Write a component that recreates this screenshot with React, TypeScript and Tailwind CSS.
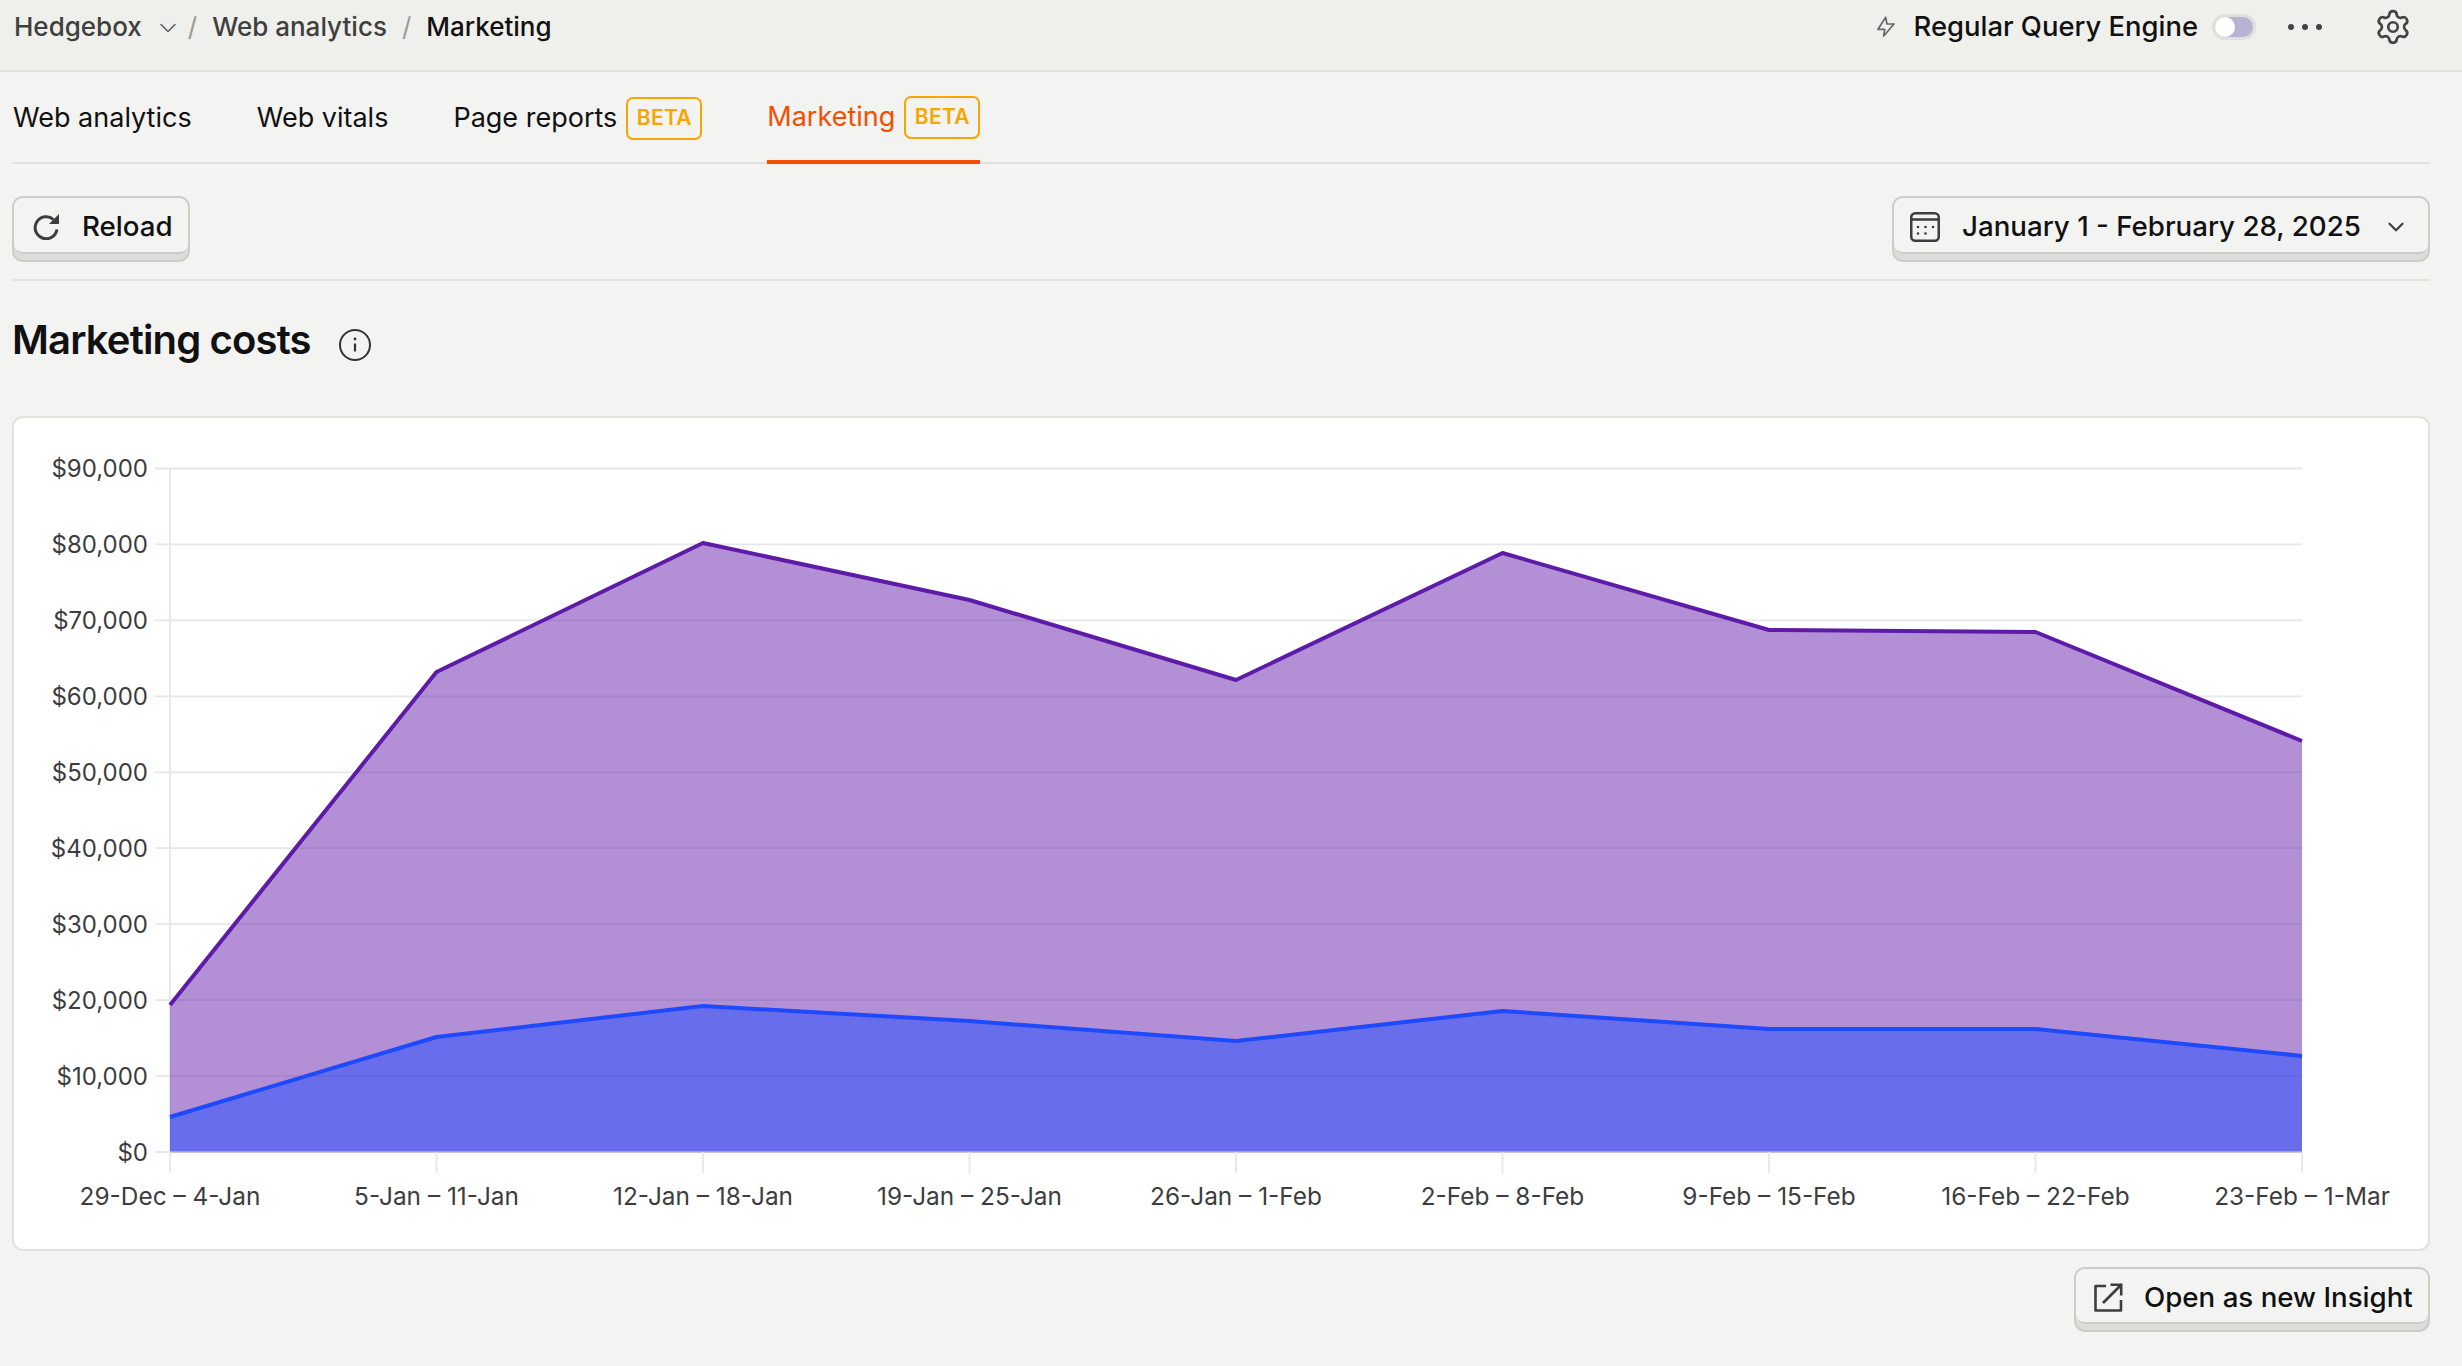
import { ChevronDown, Settings } from 'lucide-react'

const FONT = "font-['Inter','Noto_Sans',sans-serif]"

const yLabels = ['$90,000', '$80,000', '$70,000', '$60,000', '$50,000', '$40,000', '$30,000', '$20,000', '$10,000', '$0']
const xLabels = [
  '29-Dec – 4-Jan',
  '5-Jan – 11-Jan',
  '12-Jan – 18-Jan',
  '19-Jan – 25-Jan',
  '26-Jan – 1-Feb',
  '2-Feb – 8-Feb',
  '9-Feb – 15-Feb',
  '16-Feb – 22-Feb',
  '23-Feb – 1-Mar',
]

// y pixel of each point, inside the svg that starts at the card's corner
const PURPLE = [1005, 672, 543, 600, 680, 553, 630, 632, 741]
const BLUE = [1117, 1037, 1006, 1021, 1041, 1011, 1029, 1029, 1056]

const LEFT = 170
const RIGHT = 2302
const TOP = 468.5
const BASE = 1152
const STEP_X = (RIGHT - LEFT) / 8
const STEP_Y = (BASE - TOP) / 9

const toPoints = (ys: number[]) => ys.map((y, i) => `${LEFT + i * STEP_X},${y}`).join(' ')
const toArea = (ys: number[]) => `${LEFT},${BASE} ${toPoints(ys)} ${RIGHT},${BASE}`

function Beta() {
  return (
    <span className="flex h-[43px] w-[76px] items-center justify-center rounded-[7px] border-2 border-[#f7a501] text-[21px] font-semibold tracking-[0.3px] text-[#f7a501]">
      BETA
    </span>
  )
}

function DepthButton({ className, children }: { className: string; children: React.ReactNode }) {
  return (
    <button className={`rounded-[11px] border-2 border-[#cdcdc8] bg-[#dcdcd8] pb-[6px] text-[27.7px] font-medium text-[#111] ${className}`}>
      <span className="flex h-full items-center rounded-[9px] border-b-2 border-[#cdcdc8] bg-[#f3f3f1] pt-[4px]">{children}</span>
    </button>
  )
}

function Chart() {
  return (
    // the svg is placed so its coordinates equal the page's
    <svg viewBox="12 416 2418 835" className="block h-[835px] w-[2418px]">
      {yLabels.map((label, i) => {
        const y = TOP + i * STEP_Y
        return (
          <g key={label}>
            <line x1={155} x2={RIGHT} y1={y} y2={y} stroke="#e6e6eb" strokeWidth={1.8} />
            <text x={148} y={y + 8.5} textAnchor="end" fontSize={24} fill="#3d3d40">
              {label}
            </text>
          </g>
        )
      })}
      <line x1={LEFT} x2={LEFT} y1={TOP} y2={BASE} stroke="#e6e6eb" strokeWidth={1.8} />
      <polygon points={toArea(PURPLE)} fill="#5d14a7" fillOpacity={0.47} />
      <polygon points={toArea(BLUE)} fill="#1d4aff" fillOpacity={0.5} />
      <polyline points={toPoints(PURPLE)} fill="none" stroke="#5d1ba7" strokeWidth={4} strokeLinejoin="round" />
      <polyline points={toPoints(BLUE)} fill="none" stroke="#1d4aff" strokeWidth={4} strokeLinejoin="round" />
      <line x1={LEFT} x2={RIGHT} y1={BASE} y2={BASE} stroke="#b9b9c9" strokeWidth={1.5} />
      {xLabels.map((label, i) => {
        const x = LEFT + i * STEP_X
        return (
          <g key={label}>
            <line x1={x} x2={x} y1={BASE} y2={1173} stroke="#e6e6eb" strokeWidth={1.8} />
            <text x={x} y={1204.5} textAnchor="middle" fontSize={24.4} fill="#3d3d40">
              {label}
            </text>
          </g>
        )
      })}
    </svg>
  )
}

export default function App() {
  return (
    <div className={`${FONT} min-h-screen bg-[#f3f3f1] text-[#111]`}>
      {/* Top bar */}
      <header className="flex h-[72px] items-center justify-between border-b-2 border-[#e2e2dd] bg-[#efefeb] pb-[17px] pl-[14px] pr-[50px] text-[26px] font-medium">
        <div className="flex items-center">
          <span className="text-[#3f3f3f]">Hedgebox</span>
          <ChevronDown className="ml-[12px] mt-[2px] h-[28px] w-[28px] text-[#555]" strokeWidth={1.2} />
          <span className="ml-[6px] font-normal text-[#9a9a96]">/</span>
          <span className="ml-[15px] text-[#3f3f3f]">Web analytics</span>
          <span className="ml-[15px] font-normal text-[#9a9a96]">/</span>
          <span className="ml-[15px] text-[#111]">Marketing</span>
        </div>
        <div className="flex items-center">
          <svg viewBox="0 0 22 24" className="h-[24px] w-[22px] text-[#666]" fill="none" stroke="currentColor" strokeWidth={1.7} strokeLinejoin="round">
            <path d="M10.7 2.3 3 14.3h6.7L8.7 21 19 9h-7z" />
          </svg>
          <span className="ml-[17px] text-[27.4px] font-medium leading-none">Regular Query Engine</span>
          <span className="ml-[14px] flex h-[26px] w-[44px] items-center rounded-full border-[3px] border-[#e0e0da] bg-[#b6b3d3]">
            <span className="h-[20px] w-[20px] rounded-full bg-white" />
          </span>
          <span className="ml-[32px] flex w-[34px] justify-between">
            <span className="h-[6px] w-[6px] rounded-full bg-[#444]" />
            <span className="h-[6px] w-[6px] rounded-full bg-[#444]" />
            <span className="h-[6px] w-[6px] rounded-full bg-[#444]" />
          </span>
          <Settings className="ml-[52px] h-[38px] w-[38px] text-[#444]" strokeWidth={1.7} />
        </div>
      </header>

      <main className="pl-[12px] pr-[32px]">
        {/* Tabs */}
        <nav className="flex h-[92px] items-stretch gap-[65px] border-b-2 border-[#e2e2dd] pt-[2px] text-[27px]">
          <span className="flex items-center pl-px">Web analytics</span>
          <span className="flex items-center">Web vitals</span>
          <span className="flex items-center gap-[9px]">
            Page reports
            <Beta />
          </span>
          <span className="-mb-[2px] flex items-center gap-[9px] border-b-4 border-[#f54e00] text-[#f54e00]">
            Marketing
            <Beta />
          </span>
        </nav>

        {/* Toolbar */}
        <div className="flex items-start justify-between border-b-2 border-[#e2e2dd] pb-[17px] pt-[32px]">
          <DepthButton className="h-[66px] w-[178px]">
            <svg viewBox="0 0 26 26" className="ml-[19px] h-[26px] w-[26px] text-[#3d3d3d]">
              <path d="M20.5 5.5A11 11 0 1 0 24 15.5" fill="none" stroke="currentColor" strokeWidth={3} />
              <path d="M26 0v10H16z" fill="currentColor" />
            </svg>
            <span className="ml-[23px]">Reload</span>
          </DepthButton>
          <DepthButton className="h-[66px] w-[538px]">
            <svg viewBox="0 0 30 30" className="ml-[16px] h-[30px] w-[30px] text-[#3d3d3d]" fill="none" stroke="currentColor" strokeWidth={2.5}>
              <rect x="1.25" y="1.25" width="27.5" height="27.5" rx="4" />
              <path d="M1.25 7.5h27.5" />
              <g fill="currentColor" stroke="none">
                <circle cx="8" cy="15" r="1.3" />
                <circle cx="15.5" cy="15" r="1.3" />
                <circle cx="23" cy="15" r="1.3" />
                <circle cx="8" cy="21.5" r="1.3" />
                <circle cx="15.5" cy="21.5" r="1.3" />
              </g>
            </svg>
            <span className="ml-[22px]">January 1 - February 28, 2025</span>
            <ChevronDown className="ml-[22px] h-[26px] w-[26px] text-[#3d3d3d]" strokeWidth={2} />
          </DepthButton>
        </div>

        {/* Title */}
        <div className="flex h-[135px] items-start pt-[34px]">
          <h1 className="text-[40px] font-semibold leading-[50px] tracking-[-0.85px]">Marketing costs</h1>
          <svg viewBox="0 0 32 32" className="ml-[28px] mt-[14px] h-[32px] w-[32px] text-[#333]" fill="none" stroke="currentColor" strokeWidth={2}>
            <circle cx="16" cy="16" r="15" />
            <path d="M16 14.5v8" strokeWidth={2.2} />
            <circle cx="16" cy="10" r="1.4" fill="currentColor" stroke="none" />
          </svg>
        </div>

        {/* Chart card */}
        <section className="box-content h-[831px] w-[2414px] overflow-hidden rounded-[11px] border-2 border-[#e2e2dd] bg-white">
          <div className="-m-[2px]">
            <Chart />
          </div>
        </section>

        <div className="flex justify-end pt-[16px]">
          <DepthButton className="h-[65px] w-[356px]">
            <svg viewBox="0 0 30 30" className="ml-[17px] h-[30px] w-[30px] text-[#3d3d3d]" fill="none" stroke="currentColor" strokeWidth={2.6}>
              <path d="M13 3H2.5v24.5H28V17" strokeLinejoin="round" />
              <path d="M10 20 27 3" />
              <path d="M17.5 1.8h10.7v10.7" />
            </svg>
            <span className="ml-[21px]">Open as new Insight</span>
          </DepthButton>
        </div>
      </main>
    </div>
  )
}
